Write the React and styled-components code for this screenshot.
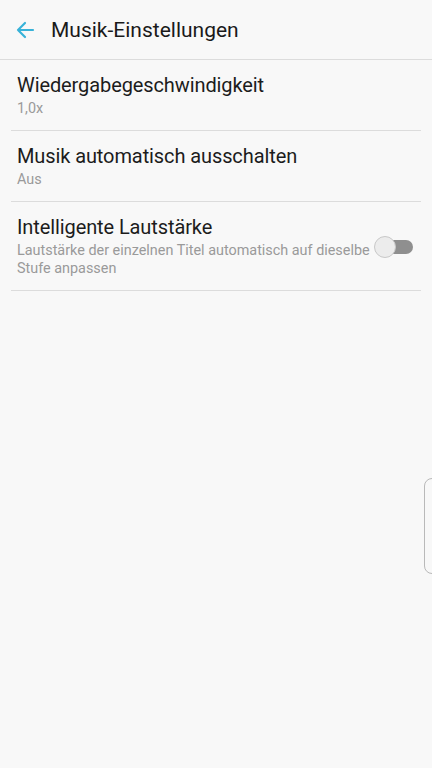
import React from "react";
import styled, { createGlobalStyle } from "styled-components";

const Global = createGlobalStyle`
  html, body {
    margin: 0;
    padding: 0;
    background: #f8f8f8;
    font-family: Roboto, "Noto Sans", sans-serif;
  }
`;

const Page = styled.div`
  width: 432px;
  height: 768px;
  background: #f8f8f8;
  position: relative;
  overflow: hidden;
`;

const Header = styled.header`
  height: 59px;
  display: flex;
  align-items: center;
  padding-left: 15px;
  gap: 16px;
  border-bottom: 1px solid #dcdcdc;
`;

const Title = styled.h1`
  margin: 0;
  font-size: 21px;
  font-weight: 400;
  color: #1a1a1a;
  padding-top: 1px;
`;

const List = styled.div`
  margin: 0 11px;
`;

const Item = styled.div`
  display: flex;
  align-items: center;
  padding: 13px 8px 12px 6px;
  border-bottom: 1px solid #dcdcdc;
`;

const Texts = styled.div`
  flex: 1;
  min-width: 0;
`;

const ItemTitle = styled.div`
  font-size: 20px;
  line-height: 24px;
  margin-bottom: 3px;
  letter-spacing: -0.1px;
  color: #1c1c1c;
`;

const ItemSub = styled.div`
  font-size: 14.4px;
  line-height: 18px;
  color: #9a9a9a;
`;

const Switch = styled.div`
  position: relative;
  width: 39px;
  height: 22px;
  flex-shrink: 0;
  margin-top: 1px;
  &::before {
    content: "";
    position: absolute;
    left: 7px;
    right: 0;
    top: 4px;
    height: 14px;
    border-radius: 7px;
    background: #8f8f8f;
  }
  &::after {
    content: "";
    position: absolute;
    left: 0;
    top: 0;
    width: 20px;
    height: 20px;
    border-radius: 50%;
    background: #ececec;
    border: 1px solid #c8c8c8;
  }
`;

const EdgeHandle = styled.div`
  position: absolute;
  right: -8px;
  top: 478px;
  width: 14px;
  height: 94px;
  border: 1.5px solid #b9b9b9;
  border-radius: 8px;
`;

const BackArrow = () => (
  <svg width="20" height="20" viewBox="0 0 20 20" fill="none">
    <path
      d="M18 10H3M10 3l-7 7 7 7"
      stroke="#38b2d8"
      strokeWidth="2.2"
      strokeLinecap="round"
      strokeLinejoin="round"
    />
  </svg>
);

const items = [
  { title: "Wiedergabegeschwindigkeit", sub: "1,0x" },
  { title: "Musik automatisch ausschalten", sub: "Aus" },
  {
    title: "Intelligente Lautstärke",
    sub: "Lautstärke der einzelnen Titel automatisch auf dieselbe Stufe anpassen",
    toggle: true,
  },
];

export default function App() {
  return (
    <Page>
      <Global />
      <Header>
        <BackArrow />
        <Title>Musik-Einstellungen</Title>
      </Header>
      <List>
        {items.map((it) => (
          <Item key={it.title}>
            <Texts>
              <ItemTitle>{it.title}</ItemTitle>
              <ItemSub>{it.sub}</ItemSub>
            </Texts>
            {it.toggle && <Switch />}
          </Item>
        ))}
      </List>
      <EdgeHandle />
    </Page>
  );
}
